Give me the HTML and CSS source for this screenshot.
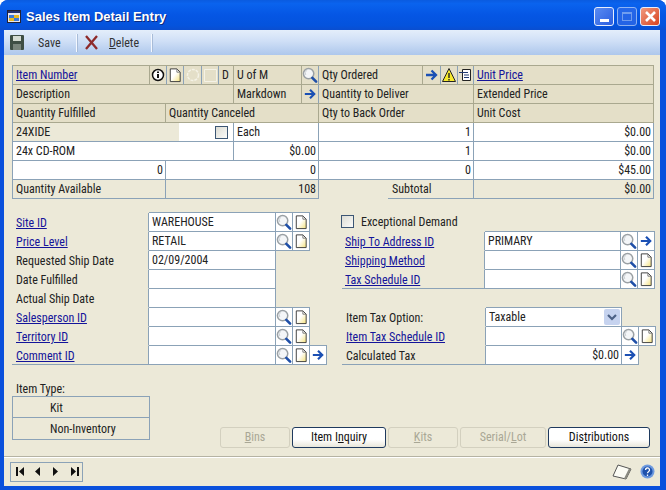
FILE: index.html
```
<html>
	<head>
		<title>Sales Item Detail Entry</title>
		<link rel="stylesheet" href="styles.css">
	</head>
	<body>
		<svg class="defs" width="0" height="0">
			<defs>
				<linearGradient id="paper" x1="0" y1="0" x2="1" y2="1">
					<stop offset="0.45" stop-color="#fff"/>
					<stop offset="1" stop-color="#f5e27a"/>
				</linearGradient>
				<symbol id="lens" viewBox="0 0 17 18">
					<circle cx="7" cy="7.500" r="5.500" fill="#f4f6f8" stroke="#9aa0a4" stroke-width="1.600"/>
					<path d="M4 9a4 4 0 0 1 1-5" fill="none" stroke="#c9ced2"/>
					<path d="M11 12l4 4" stroke="#1f4fa8" stroke-width="2.800" stroke-linecap="round"/>
				</symbol>
				<symbol id="page" viewBox="0 0 17 18">
					<path d="M3.500 2.500h7l3.500 3.500v10h-10.500z" fill="url(#paper)" stroke="#3a3a3a"/>
					<path d="M10.500 2.500v3.500h3.500" fill="none" stroke="#777"/>
				</symbol>
				<symbol id="arrow" viewBox="0 0 17 18">
					<path d="M3 9h9M8.500 4.500l4.500 4.500-4.500 4.500" fill="none" stroke="#1b50b4" stroke-width="2.300"/>
				</symbol>
				<symbol id="down" viewBox="0 0 16 16">
					<rect width="16" height="16" rx="2" fill="#c6d3ef"/>
					<path d="M4 6l4 4 4-4" fill="none" stroke="#4c6185" stroke-width="2.200"/>
				</symbol>
			</defs>
		</svg>
		<div class="window">
			<div class="titlebar">
				<svg class="title-icon" width="14" height="13" viewBox="0 0 14 13">
					<rect x="0.500" y="0.500" width="13" height="12" fill="#e6e6f0" stroke="#223"/>
					<rect x="1" y="1" width="12" height="2" fill="#23306e"/>
					<rect x="2" y="5" width="5" height="3" fill="#3a78d8"/>
					<rect x="7" y="5" width="5" height="3" fill="#e8b820"/>
					<rect x="2" y="8" width="5" height="3" fill="#e8b820"/>
					<rect x="7" y="8" width="5" height="3" fill="#3a78d8"/>
				</svg>
				<span class="title-text">Sales Item Detail Entry</span>
				<div class="win-btn min-btn"><span class="min-mark"></span></div>
				<div class="win-btn max-btn"><span class="max-mark"></span></div>
				<div class="win-btn close-btn">
					<svg width="13" height="13" viewBox="0 0 13 13"><path d="M2 2l9 9M11 2l-9 9" stroke="#fff" stroke-width="2.600"/></svg>
				</div>
			</div>
			<div class="frame">
				<div class="toolbar">
					<svg class="save-icon" width="14" height="15" viewBox="0 0 14 15">
						<rect width="14" height="15" rx="1" fill="#3f4f45"/>
						<rect x="3" y="1" width="8" height="5" fill="#d5dcd3"/>
						<rect x="3" y="9" width="8" height="6" fill="#79857c"/>
					</svg>
					<span class="tool-save">Save</span>
					<span class="tool-sep"></span>
					<svg class="del-icon" width="15" height="15" viewBox="0 0 15 15"><path d="M2 1l11 13M13 1l-11 13" stroke="#8e2a2a" stroke-width="2.300"/></svg>
					<span class="tool-del"><u>D</u>elete</span>
					<span class="tool-sep"></span>
				</div>
				<div class="form">
					<div class="sheet">
						<div class="row row-a">
							<div class="cell head"><a href="#">Item Number</a></div>
							<div class="cell head blue ico">
								<svg width="16" height="18" viewBox="0 0 16 18"><circle cx="8" cy="9" r="5.500" fill="#fff" stroke="#111" stroke-width="1.500"/><path d="M8 8v4M8 5.500v1.500" stroke="#111" stroke-width="2"/></svg>
							</div>
							<div class="cell head blue ico"><svg width="17" height="18"><use href="#page"/></svg></div>
							<div class="cell head blue ico">
								<svg width="16" height="18" viewBox="0 0 16 18"><circle cx="8" cy="9" r="5.500" fill="none" stroke="#f4f2e6" stroke-width="1.500" stroke-dasharray="3 1"/></svg>
							</div>
							<div class="cell head blue ico">
								<svg width="16" height="18" viewBox="0 0 16 18"><path d="M2.500 15.500v-12h12" fill="none" stroke="#f4f2e6"/><path d="M2.500 15.500h12v-12" fill="none" stroke="#f4f2e6"/></svg>
							</div>
							<div class="cell head">D</div>
							<div class="cell head">U of M</div>
							<div class="cell head blue ico"><svg width="17" height="18"><use href="#lens"/></svg></div>
							<div class="cell head">Qty Ordered</div>
							<div class="cell head blue ico"><svg width="17" height="18"><use href="#arrow"/></svg></div>
							<div class="cell head blue ico">
								<svg width="16" height="18" viewBox="0 0 16 18"><path d="M8 2.500l6.500 13h-13z" fill="#f7ea2e" stroke="#222"/><path d="M8 7v5M8 13v1.500" stroke="#222" stroke-width="1.400"/></svg>
							</div>
							<div class="cell head blue ico">
								<svg width="15" height="18" viewBox="0 0 15 18"><path d="M4.500 3.500h8v11h-8z" fill="#fff" stroke="#222"/><path d="M1 6.500h9M6 9h5M6 11.500h5" stroke="#223a70"/></svg>
							</div>
							<div class="cell head"><a href="#">Unit Price</a></div>
						</div>
						<div class="row row-b">
							<div class="cell head">Description</div>
							<div class="cell head">Markdown</div>
							<div class="cell head blue ico"><svg width="17" height="18"><use href="#arrow"/></svg></div>
							<div class="cell head">Quantity to Deliver</div>
							<div class="cell head">Extended Price</div>
						</div>
						<div class="row row-c">
							<div class="cell head">Quantity Fulfilled</div>
							<div class="cell head">Quantity Canceled</div>
							<div class="cell head">Qty to Back Order</div>
							<div class="cell head">Unit Cost</div>
						</div>
						<div class="row row-d">
							<div class="cell part">
								<span class="part-no">24XIDE</span>
								<span class="part-check"><span class="check"></span></span>
							</div>
							<div class="cell">Each</div>
							<div class="cell num">1</div>
							<div class="cell num">$0.00</div>
						</div>
						<div class="row row-d">
							<div class="cell">24x CD-ROM</div>
							<div class="cell num">$0.00</div>
							<div class="cell num">1</div>
							<div class="cell num">$0.00</div>
						</div>
						<div class="row row-c">
							<div class="cell num">0</div>
							<div class="cell num">0</div>
							<div class="cell num">0</div>
							<div class="cell num">$45.00</div>
						</div>
						<div class="row row-c">
							<div class="cell plain">Quantity Available</div>
							<div class="cell plain num">108</div>
							<div class="cell plain subtotal"><span class="subtotal-label">Subtotal</span></div>
							<div class="cell plain num">$0.00</div>
						</div>
					</div>

					<div class="lower">
						<div class="lookups">
							<div class="row row-l">
								<div class="cell label"><a href="#">Site ID</a></div>
								<div class="cell top">WAREHOUSE</div>
								<div class="cell ico top"><svg width="17" height="18"><use href="#lens"/></svg></div>
								<div class="cell ico top"><svg width="17" height="18"><use href="#page"/></svg></div>
							</div>
							<div class="row row-l">
								<div class="cell label"><a href="#">Price Level</a></div>
								<div class="cell">RETAIL</div>
								<div class="cell ico"><svg width="17" height="18"><use href="#lens"/></svg></div>
								<div class="cell ico"><svg width="17" height="18"><use href="#page"/></svg></div>
							</div>
							<div class="row row-l">
								<div class="cell label">Requested Ship Date</div>
								<div class="cell">02/09/2004</div>
							</div>
							<div class="row row-l">
								<div class="cell label">Date Fulfilled</div>
								<div class="cell"></div>
							</div>
							<div class="row row-l">
								<div class="cell label">Actual Ship Date</div>
								<div class="cell"></div>
							</div>
							<div class="row row-l">
								<div class="cell label"><a href="#">Salesperson ID</a></div>
								<div class="cell"></div>
								<div class="cell ico top"><svg width="17" height="18"><use href="#lens"/></svg></div>
								<div class="cell ico top"><svg width="17" height="18"><use href="#page"/></svg></div>
							</div>
							<div class="row row-l">
								<div class="cell label"><a href="#">Territory ID</a></div>
								<div class="cell"></div>
								<div class="cell ico"><svg width="17" height="18"><use href="#lens"/></svg></div>
								<div class="cell ico"><svg width="17" height="18"><use href="#page"/></svg></div>
							</div>
							<div class="row row-l">
								<div class="cell label last"><a href="#">Comment ID</a></div>
								<div class="cell"></div>
								<div class="cell ico"><svg width="17" height="18"><use href="#lens"/></svg></div>
								<div class="cell ico"><svg width="17" height="18"><use href="#page"/></svg></div>
								<div class="cell ico top"><svg width="17" height="18"><use href="#arrow"/></svg></div>
							</div>
						</div>

						<div class="shipping">
							<div class="demand"><span class="check"></span>Exceptional Demand</div>
							<div class="row row-s">
								<div class="cell label"><a href="#">Ship To Address ID</a></div>
								<div class="cell top">PRIMARY</div>
								<div class="cell ico top"><svg width="17" height="18"><use href="#lens"/></svg></div>
								<div class="cell ico top"><svg width="17" height="18"><use href="#arrow"/></svg></div>
							</div>
							<div class="row row-s">
								<div class="cell label"><a href="#">Shipping Method</a></div>
								<div class="cell"></div>
								<div class="cell ico"><svg width="17" height="18"><use href="#lens"/></svg></div>
								<div class="cell ico"><svg width="17" height="18"><use href="#page"/></svg></div>
							</div>
							<div class="row row-s">
								<div class="cell label last"><a href="#">Tax Schedule ID</a></div>
								<div class="cell"></div>
								<div class="cell ico"><svg width="17" height="18"><use href="#lens"/></svg></div>
								<div class="cell ico"><svg width="17" height="18"><use href="#page"/></svg></div>
							</div>
							<div class="spacer"></div>
							<div class="row row-t">
								<div class="cell label">Item Tax Option:</div>
								<div class="cell top select">Taxable<svg width="16" height="16"><use href="#down"/></svg></div>
							</div>
							<div class="row row-t">
								<div class="cell label"><a href="#">Item Tax Schedule ID</a></div>
								<div class="cell"></div>
								<div class="cell ico top"><svg width="17" height="18"><use href="#lens"/></svg></div>
								<div class="cell ico top"><svg width="17" height="18"><use href="#page"/></svg></div>
							</div>
							<div class="row row-t">
								<div class="cell label last">Calculated Tax</div>
								<div class="cell num">$0.00</div>
								<div class="cell ico"><svg width="17" height="18"><use href="#arrow"/></svg></div>
							</div>
						</div>
					</div>

					<div class="bottom">
						<div class="item-type">
							<div class="item-type-label">Item Type:</div>
							<div class="type-box">
								<div class="type-row">Kit</div>
								<div class="type-row">Non-Inventory</div>
							</div>
						</div>
						<div class="buttons">
							<button class="btn btn-bins" disabled><u>B</u>ins</button>
							<button class="btn btn-inquiry">Item I<u>n</u>quiry</button>
							<button class="btn btn-kits" disabled><u>K</u>its</button>
							<button class="btn btn-serial" disabled>Serial/<u>L</u>ot</button>
							<button class="btn btn-dist">Dis<u>t</u>ributions</button>
						</div>
					</div>
				</div>
				<div class="footer">
					<div class="nav">
						<svg width="73" height="20" viewBox="0 0 73 20">
							<path d="M6 5h2v9h-2zM14 5v9l-5-4.500zM30 5v9l-5-4.500zM43 5v9l5-4.500zM61 5v9l5-4.500zM67 5h2v9h-2z" fill="#111"/>
						</svg>
					</div>
					<svg class="note-icon" width="20" height="16" viewBox="0 0 20 16">
						<path d="M6 1l13 4-5 10-13-3z" fill="#fbfbf4" stroke="#555"/>
						<path d="M19 5l-5 10-2-.500 5-10z" fill="#8a8a80"/>
					</svg>
					<svg class="help-icon" width="15" height="15" viewBox="0 0 15 15">
						<circle cx="7.500" cy="7.500" r="7" fill="#6f9be0"/>
						<circle cx="7.500" cy="7.500" r="5" fill="#1f52ac"/>
						<path d="M5.500 6a2 2 0 1 1 3 1.700c-.8.500-1 .8-1 1.600M7.500 10.500v1.500" fill="none" stroke="#fff" stroke-width="1.300"/>
					</svg>
				</div>
			</div>
		</div>
	</body>
</html>
```

FILE: styles.css
```
html, body {
	margin: 0;
	padding: 0;
	background: #fff;
}
body {
	font-family: Roboto, "Liberation Sans", sans-serif;
	font-size: 12px;
	font-stretch: 85%;
	color: #222;
}
a {
	color: #14149a;
}
.defs {
	display: block;
	height: 0;
}
.window {
	width: 666px;
	height: 490px;
	display: flex;
	flex-direction: column;
	background: #0a50dc;
	border-radius: 8px 8px 0 0;
	overflow: hidden;
}
.titlebar {
	height: 30px;
	flex: none;
	display: flex;
	align-items: center;
	padding: 3px 6px 0 7px;
	box-sizing: border-box;
	background: linear-gradient(#0a5be0, #0a63ee 12%, #0556e4 50%, #0453dd 85%, #0a4ed0);
}
.title-icon {
	margin-right: 5px;
}
.title-text {
	flex: 1;
	color: #fff;
	font: bold 13px "Liberation Sans", sans-serif;
	text-shadow: 1px 1px 0 #0a2a80;
}
.win-btn {
	width: 20px;
	height: 19px;
	margin-left: 3px;
	box-sizing: border-box;
	border: 1px solid #e8eefc;
	border-radius: 3px;
	display: flex;
	justify-content: center;
	background: #3a6eea;
}
.min-btn {
	align-items: flex-end;
	background: linear-gradient(135deg, #5a8cf2, #2b5ee0);
}
.min-mark {
	width: 9px;
	height: 3px;
	background: #fff;
	margin-bottom: 3px;
}
.max-btn {
	align-items: center;
	opacity: 0.6;
}
.max-mark {
	width: 10px;
	height: 9px;
	box-sizing: border-box;
	border: 1px solid #b8ccf5;
	border-top-width: 2px;
}
.close-btn {
	align-items: center;
	background: linear-gradient(135deg, #f09a80, #d8431f);
}
.frame {
	flex: 1;
	min-height: 0;
	display: flex;
	flex-direction: column;
	margin: 0 6px 4px 4px;
	background: #ece9d8;
}
.toolbar {
	height: 25px;
	flex: none;
	display: flex;
	align-items: center;
	padding-left: 6px;
	background: linear-gradient(#e4eefb, #cfdff6 45%, #adc7ec);
	color: #333;
}
.tool-save {
	margin-left: 14px;
	width: 38px;
}
.tool-sep {
	width: 1px;
	height: 18px;
	background: #f4f8ff;
	box-shadow: 1px 0 0 #a8bcd8;
}
.del-icon {
	margin-left: 7px;
}
.tool-del {
	margin-left: 10px;
	width: 42px;
}
.form {
	flex: 1;
	padding: 10px 0 0 8px;
}

/* cells and rows */
.sheet {
	width: 642px;
	box-sizing: border-box;
	border-top: 1px solid #a9a88f;
	border-left: 1px solid #8ba2b7;
}
.row {
	display: grid;
	grid-template-rows: 19px;
	height: 19px;
}
.row-a {
	grid-template-columns: 137px 17px 17px 18px 17px 15px 68px 17px 104px 18px 17px 16px 180px;
}
.row-b {
	grid-template-columns: 221px 68px 17px 155px 180px;
}
.row-c {
	grid-template-columns: 153px 153px 155px 180px;
}
.row-d {
	grid-template-columns: 221px 85px 155px 180px;
}
.row-l {
	grid-template-columns: 137px 127px 17px 17px 17px;
}
.row-s {
	grid-template-columns: 143px 136px 17px 17px;
}
.row-t {
	grid-template-columns: 144px 136px 17px 17px;
}
.cell {
	box-sizing: border-box;
	min-width: 0;
	padding-left: 3px;
	line-height: 18px;
	white-space: nowrap;
	background: #fff;
	border-right: 1px solid #8ba2b7;
	border-bottom: 1px solid #8ba2b7;
}
.head {
	background: #e4dfc8;
	border-color: #a9a88f;
}
.head.blue {
	border-right-color: #8ba2b7;
}
.plain {
	background: #ece9d8;
}
.num {
	text-align: right;
	padding-right: 2px;
}
.ico {
	padding: 0;
	display: flex;
	justify-content: center;
}
.top {
	margin-top: -1px;
	border-top: 1px solid #8ba2b7;
}
.part {
	display: flex;
	padding: 0;
}
.part-no {
	width: 166px;
	padding-left: 3px;
	box-sizing: border-box;
	background: #ece9d8;
}
.part-check {
	flex: 1;
	display: flex;
	align-items: center;
	justify-content: flex-end;
	padding-right: 5px;
}
.check {
	width: 13px;
	height: 13px;
	flex: none;
	box-sizing: border-box;
	border: 1px solid #3c5674;
	background: linear-gradient(135deg, #dcdcd4, #fbfbf9);
}
.subtotal {
	display: flex;
	padding: 0;
	border-bottom: 0;
	justify-content: flex-end;
}
.subtotal-label {
	width: 85px;
	height: 19px;
	padding-left: 4px;
	box-sizing: border-box;
	border-bottom: 1px solid #8ba2b7;
}

/* lower half */
.lower {
	display: flex;
	margin-top: 14px;
}
.lookups {
	width: 330px;
}
.label {
	background: none;
	border-bottom-color: transparent;
	padding-left: 4px;
	line-height: 20px;
}
.row-s .label {
	padding-left: 3px;
}
.label.last {
	border-bottom-color: #8ba2b7;
}
.demand {
	height: 19px;
	box-sizing: border-box;
	padding-bottom: 2px;
	display: flex;
	align-items: center;
	margin-left: -1px;
}
.demand .check {
	margin-right: 7px;
}
.spacer {
	height: 19px;
}
.select {
	display: flex;
	justify-content: space-between;
	align-items: center;
	padding-right: 1px;
}
.bottom {
	display: flex;
}
.item-type {
	width: 138px;
	margin-top: 14px;
}
.item-type-label {
	height: 17px;
	padding-left: 4px;
	line-height: 20px;
}
.type-box {
	border: 1px solid #8ba2b7;
}
.type-row {
	height: 20px;
	padding-left: 37px;
	line-height: 22px;
	border-bottom: 1px solid #8ba2b7;
}
.type-row:last-child {
	height: 21px;
	border-bottom: 0;
}
.buttons {
	display: flex;
	margin: 62px 0 0 70px;
	gap: 2px;
}
.btn {
	height: 21px;
	box-sizing: border-box;
	padding: 0 0 1px;
	font: inherit;
	color: #111;
	border: 1px solid #1f3a5e;
	border-radius: 3px;
	background: linear-gradient(#fff, #fff 60%, #e8e6da);
}
.btn:disabled {
	color: #a9a795;
	border-color: #d3d0bf;
	background: #ece9d8;
}
.btn-bins {
	width: 70px;
}
.btn-inquiry {
	width: 94px;
}
.btn-kits {
	width: 70px;
}
.btn-serial {
	width: 86px;
}
.btn-dist {
	width: 102px;
}
.footer {
	height: 30px;
	flex: none;
	box-sizing: border-box;
	display: flex;
	align-items: center;
	padding-left: 6px;
	border-top: 1px solid #b5b3a3;
	box-shadow: inset 0 1px 0 #fff;
}
.nav {
	width: 73px;
	height: 20px;
	box-sizing: border-box;
	border: 1px solid #8ba2b7;
	margin-right: 529px;
}
.nav svg {
	display: block;
	margin: -1px;
}
.note-icon {
	margin-right: 8px;
}
```
